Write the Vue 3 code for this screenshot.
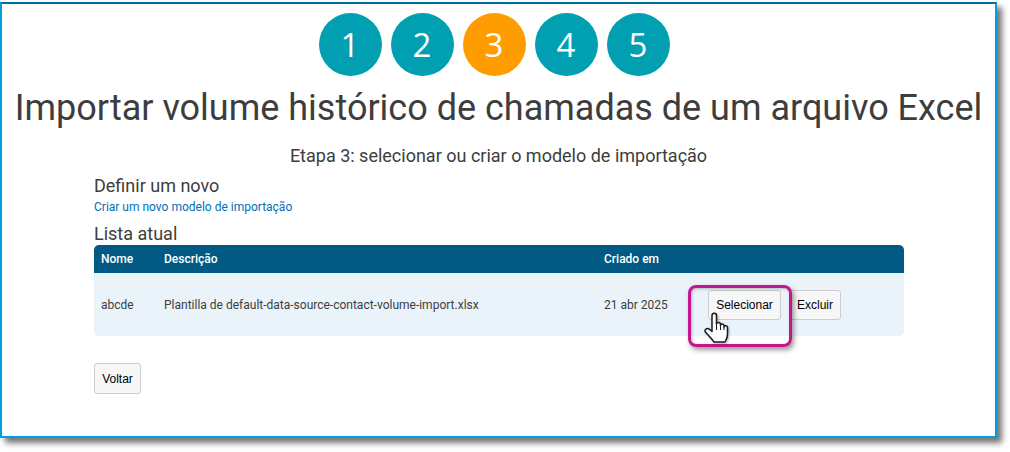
<script setup>
const steps = [1, 2, 3, 4, 5]
</script>

<template>
  <div class="page">
    <div class="frame">
      <div class="steps">
        <div v-for="s in steps" :key="s" class="step" :class="{ active: s === 3 }">{{ s }}</div>
      </div>
      <h1 class="title">Importar volume histórico de chamadas de um arquivo Excel</h1>
      <p class="subtitle">Etapa 3: selecionar ou criar o modelo de importação</p>
      <div class="content">
        <h2 class="section">Definir um novo</h2>
        <a class="link">Criar um novo modelo de importação</a>
        <h2 class="section list-title">Lista atual</h2>
        <div class="table">
          <div class="row head">
            <div class="c1">Nome</div>
            <div class="c2">Descrição</div>
            <div class="c3">Criado em</div>
          </div>
          <div class="row body">
            <div class="c1">abcde</div>
            <div class="c2">Plantilla de default-data-source-contact-volume-import.xlsx</div>
            <div class="c3">21 abr 2025</div>
            <div class="c4">
              <button class="btn select">Selecionar</button>
              <button class="btn">Excluir</button>
            </div>
          </div>
        </div>
        <button class="btn back">Voltar</button>
      </div>
      <div class="highlight"></div>
      <svg class="cursor" viewBox="0 0 26 32" width="26" height="32">
        <path d="M8 3.500C8 .5 12.500 .5 12.500 3.500V12C12.500 10 16.500 10 16.500 12.500V13.500C16.500 11.500 20 11.500 20 14V15C20 13 23.500 13.500 23.500 15.500V22C23.500 26 22 28 21 30H10C8 27 5 24 1.500 20C0 18 2.500 15.500 5 17L8 19.500Z" fill="#fff" stroke="#1a1a1a" stroke-width="1.500" stroke-linejoin="round"/>
        <path d="M12.500 12V18M16.500 13V18M20 15V18" fill="none" stroke="#1a1a1a" stroke-width="1"/>
      </svg>
    </div>
  </div>
</template>

<style>
html, body { margin: 0; background: #fff; }
</style>

<style scoped>
.page {
  width: 1010px;
  height: 452px;
  overflow: hidden;
  background: #fff;
  padding: 2px 0 0 0;
  box-sizing: border-box;
}
.frame {
  position: relative;
  width: 997px;
  height: 436px;
  box-sizing: border-box;
  border: 2px solid #009fdf;
  border-top-color: #00709f;
  background: #fff;
  box-shadow: 5px 5px 6px rgba(0, 0, 0, 0.55);
  font-family: Roboto, sans-serif;
  color: #3d3d3d;
  padding-top: 9px;
}
.steps {
  display: flex;
  justify-content: center;
  gap: 9px;
  margin-left: -9px;
}
.step {
  width: 63px;
  height: 63px;
  border-radius: 50%;
  background: #009fb2;
  color: #fff;
  font-family: "Open Sans", sans-serif;
  font-size: 33px;
  display: flex;
  align-items: center;
  justify-content: center;
}
.step.active { background: #ff9c00; }
.title {
  margin: 8px 0 0;
  font-size: 36px;
  line-height: 48px;
  font-weight: 400;
  text-align: center;
  white-space: nowrap;
}
.subtitle {
  margin: 12px 0 0;
  font-size: 18px;
  line-height: 24px;
  text-align: center;
}
.content { margin: 0 0 0 92px; width: 810px; }
.section {
  margin: 7px 0 0;
  font-size: 18px;
  line-height: 22px;
  font-weight: 400;
}
.link {
  display: block;
  font-size: 12px;
  line-height: 14px;
  margin-top: 3px;
  color: #0070b8;
}
.list-title { margin-top: 9px; }
.table { margin-top: 0; font-size: 12px; }
.row { display: flex; align-items: center; }
.head {
  height: 28px;
  background: #005a84;
  color: #fff;
  font-weight: 500;
  border-radius: 5px 5px 0 0;
}
.body {
  height: 63px;
  background: #eaf3fa;
  border-radius: 0 0 5px 5px;
}
.c1 { width: 70px; padding-left: 7px; box-sizing: border-box; }
.c2 { width: 440px; }
.c3 { width: 95px; }
.c4 { display: flex; gap: 8px; padding-left: 9px; }
.btn {
  font-family: "Liberation Sans", Arial, sans-serif;
  font-size: 12px;
  color: #000;
  background: #f7f7f7;
  border: 1px solid #ccc;
  border-radius: 3px;
  height: 30px;
  padding: 0 7px;
}
.select { width: 73px; padding: 0; }
.back { display: block; margin-top: 27px; height: 31px; width: 47px; padding: 0; }
.highlight {
  position: absolute;
  left: 686px;
  top: 281px;
  width: 104px;
  height: 62px;
  box-sizing: border-box;
  border: 3px solid #c4158c;
  border-radius: 8px;
  box-shadow: 2px 3px 5px rgba(0, 0, 0, 0.4), inset 1px 1px 3px rgba(0, 0, 0, 0.25);
}
.cursor {
  position: absolute;
  left: 702px;
  top: 308px;
  filter: drop-shadow(1px 1px 1px rgba(0, 0, 0, 0.3));
}
</style>
